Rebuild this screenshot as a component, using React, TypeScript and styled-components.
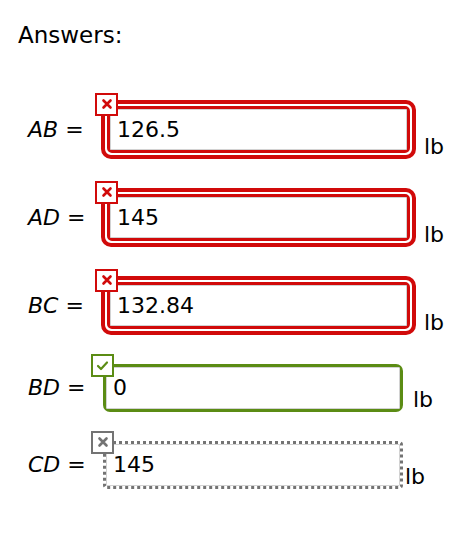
import React from 'react';
import styled, { createGlobalStyle, css } from 'styled-components';

type Status = 'wrong' | 'right' | 'blank';

type Answer = {
    name: string,
    value: string,
    status: Status,
}

const answers: Answer[] = [
    { name: 'AB', value: '126.5', status: 'wrong' },
    { name: 'AD', value: '145', status: 'wrong' },
    { name: 'BC', value: '132.84', status: 'wrong' },
    { name: 'BD', value: '0', status: 'right' },
    { name: 'CD', value: '145', status: 'blank' },
];

const RED = '#d10a0a';
const GREEN = '#5b8c14';
const GRAY = '#737373';

function BadgeIcon({ status }: { status: Status }) {
    if (status === 'right') {
        return (
            <svg width="13" height="13" viewBox="0 0 13 13">
                <polyline points="2,7 5,10 11,3.5" fill="none" stroke={GREEN} strokeWidth="2.2" strokeLinecap="round" strokeLinejoin="round" />
            </svg>
        );
    }
    const color = status === 'wrong' ? RED : GRAY;
    return (
        <svg width="12" height="12" viewBox="0 0 12 12">
            <path d="M2.5 2.5 L9.5 9.5 M9.5 2.5 L2.5 9.5" stroke={color} strokeWidth="2.6" strokeLinecap="round" />
        </svg>
    );
}

export default function App() {
    return (
        <>
            <GlobalStyle />
            <Page>
                <Heading>Answers:</Heading>
                <List>
                    {answers.map(answer => (
                        <Row key={answer.name}>
                            <Label><i>{answer.name}</i> =</Label>
                            <Field status={answer.status}>
                                <Badge status={answer.status}><BadgeIcon status={answer.status} /></Badge>
                                {answer.status === 'wrong' ? (
                                    <InnerRing>
                                        <Input tall={false} defaultValue={answer.value} />
                                    </InnerRing>
                                ) : (
                                    <Input tall defaultValue={answer.value} />
                                )}
                            </Field>
                            <Unit status={answer.status}>lb</Unit>
                        </Row>
                    ))}
                </List>
            </Page>
        </>
    );
}

const GlobalStyle = createGlobalStyle`
    body {
        margin: 0;
        background: #ffffff;
        color: #000000;
        font-family: "DejaVu Sans", Verdana, sans-serif;
    }
`;

const Page = styled.main`
    padding: 22px 0 0 18px;
`;

const Heading = styled.h2`
    margin: 0;
    font-size: 23px;
    font-weight: normal;
    line-height: 1.2;
`;

const List = styled.div`
    display: flex;
    flex-direction: column;
    gap: 29px;
    margin-top: 50px;
`;

const Row = styled.div`
    display: flex;
    align-items: baseline;
    font-size: 22px;
`;

const Label = styled.span`
    width: 85px;
    flex-shrink: 0;
    padding-left: 10px;
    box-sizing: border-box;
    white-space: nowrap;
    i {
        font-style: italic;
    }
`;

const Field = styled.div<{ status: Status }>`
    position: relative;
    display: flex;
    background: #ffffff;
    box-sizing: border-box;
    ${p => p.status === 'wrong' && css`
        width: 315px;
        margin-left: -2px;
        border: 4px solid ${RED};
        border-radius: 10px;
        padding: 2px;
    `}
    ${p => p.status === 'right' && css`
        width: 300px;
        border: 3px solid ${GREEN};
        border-radius: 7px;
    `}
    ${p => p.status === 'blank' && css`
        width: 300px;
        border: 3px dotted ${GRAY};
        border-radius: 4px;
    `}
`;

const InnerRing = styled.div`
    display: flex;
    flex: 1;
    border: 3px solid ${RED};
    border-radius: 5px;
`;

const Input = styled.input<{ tall: boolean }>`
    flex: 1;
    min-width: 0;
    height: ${p => p.tall ? '42px' : '41px'};
    box-sizing: border-box;
    margin: 0;
    padding: 0 6px;
    border: 1px solid #d2d2d2;
    border-radius: 1px;
    background: #ffffff;
    font-family: "DejaVu Sans", Verdana, sans-serif;
    font-size: 22px;
    color: #000000;
    outline: none;
`;

const Badge = styled.span<{ status: Status }>`
    position: absolute;
    z-index: 1;
    width: 23px;
    height: 23px;
    box-sizing: border-box;
    display: flex;
    align-items: center;
    justify-content: center;
    background: #ffffff;
    border: 2px solid ${p => p.status === 'wrong' ? RED : p.status === 'right' ? GREEN : GRAY};
    left: ${p => p.status === 'wrong' ? '-10px' : '-15px'};
    top: ${p => p.status === 'wrong' ? '-11px' : '-13px'};
`;

const Unit = styled.span<{ status: Status }>`
    align-self: flex-end;
    margin-left: ${p => p.status === 'wrong' ? '8px' : p.status === 'right' ? '10px' : '2px'};
`;
